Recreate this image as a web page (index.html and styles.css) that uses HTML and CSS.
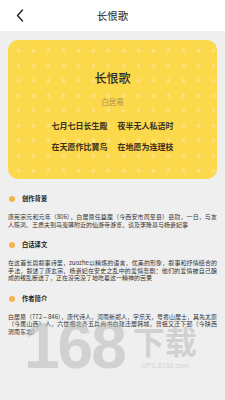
FILE: index.html
```html
<!DOCTYPE html>
<html lang="zh">
<head>
<meta charset="utf-8">
<link rel="stylesheet" href="styles.css">
</head>
<body>
<div class="page">
  <header class="topbar">
    <svg class="back" width="8" height="13" viewBox="0 0 8 13"><path d="M6.5 1 L1.5 6.5 L6.5 12" fill="none" stroke="#222" stroke-width="1.4" stroke-linecap="round" stroke-linejoin="round"/></svg>
    <div class="toptitle">长恨歌</div>
  </header>
  <main class="content">
    <section class="card">
      <div class="card-title">长恨歌</div>
      <div class="card-author">白居易</div>
      <div class="verse"><span>七月七日长生殿</span><span>夜半无人私语时</span></div>
      <div class="verse second"><span>在天愿作比翼鸟</span><span>在地愿为连理枝</span></div>
    </section>
    <section class="sec first">
      <div class="sec-head"><i class="dot"></i>创作背景</div>
      <p class="sec-body">唐宪宗元和元年（806），白居易任盩厔（今西安市周至县）县尉，一日，与友人陈鸿、王质夫到马嵬驿附近的仙游寺游览，谈及李隆基与杨贵妃事</p>
    </section>
    <section class="sec">
      <div class="sec-head"><i class="dot"></i>白话译文</div>
      <p class="sec-body">在这首长篇叙事诗里，zuozhe以精炼的语言，优美的形象，叙事和抒情结合的手法，叙述了唐玄宗、杨贵妃在安史之乱中的爱情悲剧：他们的爱情被自己酿成的叛乱断送了，正在没完没了地吃着这一精神的苦果</p>
    </section>
    <section class="sec">
      <div class="sec-head"><i class="dot"></i>作者简介</div>
      <p class="sec-body">白居易（772－846），唐代诗人，河南新郑人，字乐天，号香山居士，其先太原（今属山西）人，六世祖北齐五兵尚书白建迁居韩城，曾祖又迁下邽（今陕西渭南东北）</p>
    </section>
  </main>
  <div class="watermark">
    <span class="wm-num">168</span>
    <span class="wm-side"><span class="wm-cn">下载</span><span class="wm-url">GPS.8168.com</span></span>
  </div>
</div>
</body>
</html>
```
FILE: styles.css
```css
* { box-sizing: border-box; margin: 0; padding: 0; }
html, body { width: 225px; height: 400px; overflow: hidden; }
body { font-family: "Noto Sans CJK SC", "Noto Sans", sans-serif; background: #efefef; color: #333; }
.page { position: relative; width: 225px; height: 400px; background: #efefef; }
.topbar { height: 31px; background: #fff; display: flex; align-items: center; justify-content: center; position: relative; }
.back { position: absolute; left: 16px; top: 9px; }
.toptitle { font-size: 10.5px; line-height: 12px; color: #222; margin-top: 1px; }
.content { padding: 9px 8px 0; }
.card {
  height: 139px;
  border-radius: 10px;
  background-color: #fcd84b;
  background-image: url("data:image/svg+xml,%3Csvg xmlns='http://www.w3.org/2000/svg' width='15' height='15' viewBox='0 0 15 15'%3E%3Cpath d='M7.5 4.6 L8.3 6.6 L10.3 6.7 L8.8 8 L9.3 10 L7.5 8.9 L5.7 10 L6.2 8 L4.7 6.7 L6.7 6.6 Z' fill='%23fde27e'/%3E%3C/svg%3E");
  background-position: 3px 3px;
  display: flex; flex-direction: column; align-items: center;
  padding-top: 30px;
}
.card-title { font-size: 12px; line-height: 16px; color: #2b2b2b; font-weight: 500; }
.card-author { font-size: 7.5px; line-height: 10px; margin-top: 11px; color: #a3935a; }
.verse { display: flex; gap: 10px; margin-top: 13px; font-size: 8px; line-height: 12px; font-weight: 700; color: #3a3120; }
.verse.second { margin-top: 9px; }
.sec { margin-top: 11.3px; }
.sec.first { margin-top: 15px; }
.sec-head { display: flex; align-items: center; font-size: 6.3px; line-height: 10px; font-weight: 700; color: #222; }
.dot { display: block; width: 6px; height: 6px; border-radius: 50%; background: #f5b54a; margin-left: 1px; margin-right: 7px; }
.sec-body { margin-top: 9px; font-size: 6px; line-height: 7.8px; color: #333; text-align: justify; }
.watermark { position: absolute; left: 24px; top: 316px; display: flex; align-items: flex-start; gap: 8px; pointer-events: none; color: rgba(180,180,180,0.5); }
.wm-num { font-family: "Liberation Sans", sans-serif; font-weight: 700; font-size: 64px; line-height: 60px; letter-spacing: -2px; }
.wm-side { display: flex; flex-direction: column; align-items: center; padding-top: 6px; }
.wm-cn { font-size: 32px; line-height: 36px; font-weight: 700; }
.wm-url { font-family: "Liberation Sans", sans-serif; font-size: 7px; line-height: 10px; margin-top: 3px; }
```
